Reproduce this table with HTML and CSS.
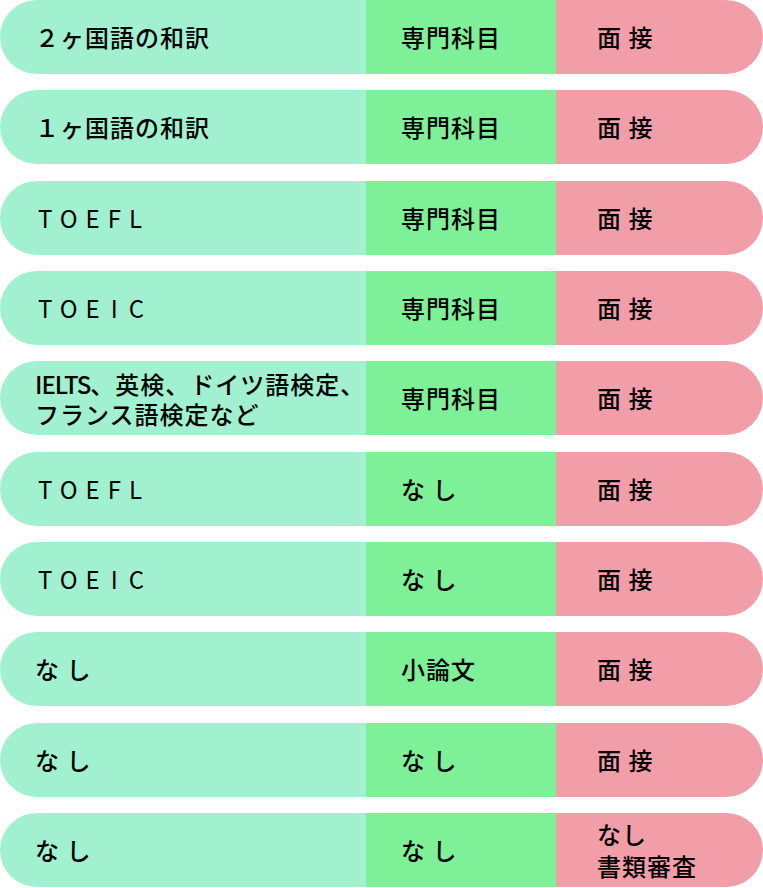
FILE: index.html
```html
<!DOCTYPE html>
<html lang="ja">
<head>
<meta charset="utf-8">
<title>試験科目</title>
<link rel="stylesheet" href="styles.css">
</head>
<body>
<div class="table">
  <div class="row">
    <div class="cell c1"><span>２ヶ国語の和訳</span></div>
    <div class="cell c2"><span>専門科目</span></div>
    <div class="cell c3"><span>面 接</span></div>
  </div>
  <div class="row">
    <div class="cell c1"><span>１ヶ国語の和訳</span></div>
    <div class="cell c2"><span>専門科目</span></div>
    <div class="cell c3"><span>面 接</span></div>
  </div>
  <div class="row">
    <div class="cell c1 latin"><span>TOEFL</span></div>
    <div class="cell c2"><span>専門科目</span></div>
    <div class="cell c3"><span>面 接</span></div>
  </div>
  <div class="row">
    <div class="cell c1 latin"><span>TOE<span class="wi">I</span>C</span></div>
    <div class="cell c2"><span>専門科目</span></div>
    <div class="cell c3"><span>面 接</span></div>
  </div>
  <div class="row">
    <div class="cell c1 two"><span class="lines"><span class="line"><span class="narrow">IELTS</span>、英検、ドイツ語検定、</span><span class="line">フランス語検定など</span></span></div>
    <div class="cell c2"><span>専門科目</span></div>
    <div class="cell c3"><span>面 接</span></div>
  </div>
  <div class="row">
    <div class="cell c1 latin"><span>TOEFL</span></div>
    <div class="cell c2"><span>な し</span></div>
    <div class="cell c3"><span>面 接</span></div>
  </div>
  <div class="row">
    <div class="cell c1 latin"><span>TOE<span class="wi">I</span>C</span></div>
    <div class="cell c2"><span>な し</span></div>
    <div class="cell c3"><span>面 接</span></div>
  </div>
  <div class="row">
    <div class="cell c1"><span>な し</span></div>
    <div class="cell c2"><span>小論文</span></div>
    <div class="cell c3"><span>面 接</span></div>
  </div>
  <div class="row">
    <div class="cell c1"><span>な し</span></div>
    <div class="cell c2"><span>な し</span></div>
    <div class="cell c3"><span>面 接</span></div>
  </div>
  <div class="row">
    <div class="cell c1"><span>な し</span></div>
    <div class="cell c2"><span>な し</span></div>
    <div class="cell c3 two"><span class="lines"><span class="line tall">なし</span><span class="line tall">書類審査</span></span></div>
  </div>
</div>
</body>
</html>
```
FILE: styles.css
```css
html, body {
  margin: 0;
  padding: 0;
  background: #ffffff;
}

body {
  font-family: "Noto Sans CJK JP", "Noto Sans", sans-serif;
  font-size: 24px;
  font-weight: 500;
  color: #000000;
}

.table {
  width: 763px;
  display: flex;
  flex-direction: column;
  gap: 16.33px;
}

.row {
  display: grid;
  grid-template-columns: 366px 190px 1fr;
  height: 74px;
  border-radius: 37px;
  overflow: hidden;
}

.cell {
  display: flex;
  align-items: center;
  letter-spacing: 1px;
  line-height: 30px;
  white-space: nowrap;
}

.c1 {
  background: #a1f1d0;
  padding-left: 35px;
}

.c2 {
  background: #7ef198;
  padding-left: 35px;
}

.c3 {
  background: #f29ea8;
  padding-left: 41px;
}

.latin {
  letter-spacing: 8px;
  padding-left: 38px;
  font-weight: 400;
}

.wi {
  margin: 0 3px;
}

.two {
  padding-top: 2px;
}

.c3.two {
  padding-top: 0;
}

.lines {
  display: flex;
  flex-direction: column;
}

.line {
  display: block;
  height: 30px;
  line-height: 30px;
}

.line.tall {
  height: 32px;
  line-height: 32px;
}

.narrow {
  letter-spacing: -1px;
}
```
